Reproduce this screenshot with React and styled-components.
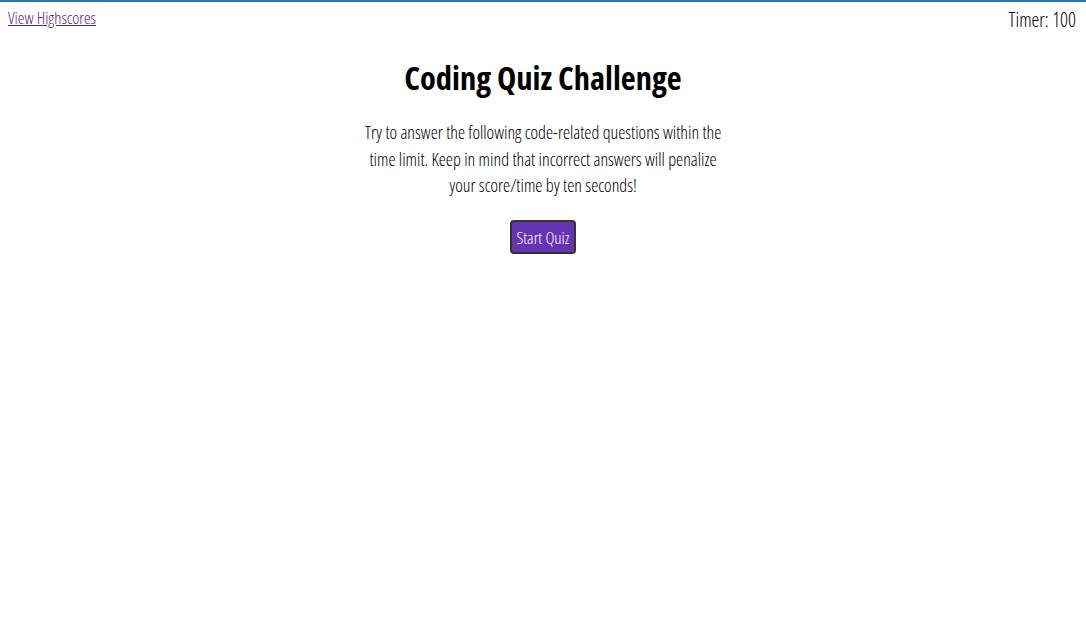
import React from 'react';
import styled, { createGlobalStyle } from 'styled-components';

const GlobalStyle = createGlobalStyle`
  html, body {
    margin: 0;
    padding: 0;
    background: #fff;
  }
  body {
    border-top: 2px solid #2e76b3;
    font-family: "Open Sans", "Roboto Condensed", sans-serif;
    font-stretch: 75%;
    font-weight: 300;
    color: #000;
  }
`;

const Header = styled.header`
  display: flex;
  justify-content: space-between;
  align-items: flex-start;
  padding: 4px 10px 0 8px;
`;

const HighscoreLink = styled.a`
  color: #551a8b;
  font-size: 16.8px;
  text-decoration: underline;
  cursor: pointer;
`;

const Timer = styled.div`
  font-size: 19.5px;
  color: #000;
`;

const Main = styled.main`
  display: flex;
  flex-direction: column;
  align-items: center;
  text-align: center;
`;

const Title = styled.h1`
  margin: 22px 0 0;
  font-size: 32.5px;
  font-weight: 700;
`;

const Intro = styled.p`
  width: 370px;
  margin: 19px 0 0;
  font-size: 18px;
  line-height: 26.5px;
`;

const StartButton = styled.button`
  margin-top: 21px;
  padding: 4px 4px 3px;
  background: #6633b4;
  color: #fff;
  border: 2px solid #333;
  border-radius: 4px;
  font-family: inherit;
  font-stretch: 75%;
  font-weight: 300;
  font-size: 17px;
  cursor: pointer;
`;

export default function App() {
  return (
    <>
      <GlobalStyle />
      <Header>
        <HighscoreLink href="#">View Highscores</HighscoreLink>
        <Timer>Timer: 100</Timer>
      </Header>
      <Main>
        <Title>Coding Quiz Challenge</Title>
        <Intro>
          Try to answer the following code-related questions within the time limit. Keep in mind
          that incorrect answers will penalize your score/time by ten seconds!
        </Intro>
        <StartButton>Start Quiz</StartButton>
      </Main>
    </>
  );
}
